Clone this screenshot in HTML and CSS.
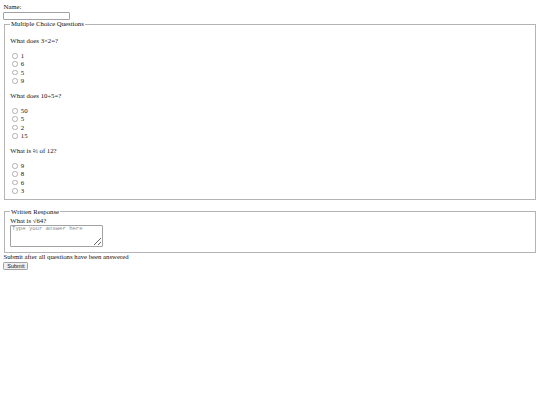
FILE: index.html
```html
<!DOCTYPE html>
<html>
<head>
<meta charset="utf-8">
<title>Quiz</title>
<link rel="stylesheet" href="styles.css">
</head>
<body class="page">
<form class="quiz">
<label for="name" class="line">Name:</label>
<input type="text" id="name" class="name-input">
<fieldset class="group">
<legend class="legend">Multiple Choice Questions</legend>
<p class="question">What does 3×2=?</p>
<label class="opt"><input type="radio" name="q1" class="radio"> 1</label>
<label class="opt"><input type="radio" name="q1" class="radio"> 6</label>
<label class="opt"><input type="radio" name="q1" class="radio"> 5</label>
<label class="opt"><input type="radio" name="q1" class="radio"> 9</label>
<p class="question">What does 10÷5=?</p>
<label class="opt"><input type="radio" name="q2" class="radio"> 50</label>
<label class="opt"><input type="radio" name="q2" class="radio"> 5</label>
<label class="opt"><input type="radio" name="q2" class="radio"> 2</label>
<label class="opt"><input type="radio" name="q2" class="radio"> 15</label>
<p class="question">What is ⅔ of 12?</p>
<label class="opt"><input type="radio" name="q3" class="radio"> 9</label>
<label class="opt"><input type="radio" name="q3" class="radio"> 8</label>
<label class="opt"><input type="radio" name="q3" class="radio"> 6</label>
<label class="opt"><input type="radio" name="q3" class="radio"> 3</label>
</fieldset>
<div class="spacer"></div>
<fieldset class="group">
<legend class="legend">Written Response</legend>
<label for="ans" class="ask">What is √64?</label>
<textarea id="ans" class="answer" placeholder="Type your answer here"></textarea>
</fieldset>
<div class="line">Submit after all questions have been answered</div>
<button type="submit" class="submit">Submit</button>
</form>
</body>
</html>
```

FILE: styles.css
```css
.page {
  margin: 3.4px;
  font-family: "Liberation Serif", "Times New Roman", serif;
  font-size: 6.75px;
  line-height: 7.76px;
  color: #111;
  background: #fff;
}
.quiz {
  margin: 0;
}
.line {
  display: block;
  line-height: 7.76px;
}
.name-input {
  display: block;
  box-sizing: border-box;
  width: 67px;
  height: 8.6px;
  margin: 0.4px 0 0 0;
  padding: 0 1px;
  border: 1px solid #a2a2a2;
  border-radius: 1px;
  font-size: 5.6px;
  background: #fff;
}
.group {
  margin: 0 0.84px;
  padding: 2.36px 5.06px 3.8px;
  border: 1px solid #b4b4b4;
  min-width: 0;
}
.legend {
  padding: 0 0.84px;
  line-height: 7.76px;
}
.question {
  margin: 6.75px 0;
  line-height: 7.76px;
}
.opt {
  display: flex;
  align-items: center;
  height: 8.44px;
  white-space: pre;
}
.radio {
  -webkit-appearance: none;
  appearance: none;
  box-sizing: border-box;
  width: 5.5px;
  height: 5.5px;
  margin: 0 1.27px 0 2.1px;
  border: 0.8px solid #b0b0b0;
  border-radius: 50%;
  background: #fff;
  flex: none;
}
.spacer {
  height: 7.76px;
}
.ask {
  display: block;
  line-height: 6.6px;
}
.answer {
  display: block;
  box-sizing: border-box;
  width: 93px;
  height: 22.6px;
  margin: 0 0 0.6px 0;
  padding: 0.84px;
  border: 1px solid #a2a2a2;
  border-radius: 1px;
  font-family: "Liberation Mono", "Courier New", monospace;
  font-size: 5.6px;
  line-height: 6.4px;
  resize: both;
}
.answer::placeholder {
  color: #8a8a8a;
}
.submit {
  display: block;
  box-sizing: border-box;
  width: 25px;
  height: 8.2px;
  margin: 1.2px 0 0 0;
  padding: 0;
  border: 1px solid #a2a2a2;
  border-radius: 1.2px;
  background: #efefef;
  font-family: "Liberation Sans", Arial, sans-serif;
  font-size: 5.6px;
  line-height: 6px;
  color: #111;
}
```
